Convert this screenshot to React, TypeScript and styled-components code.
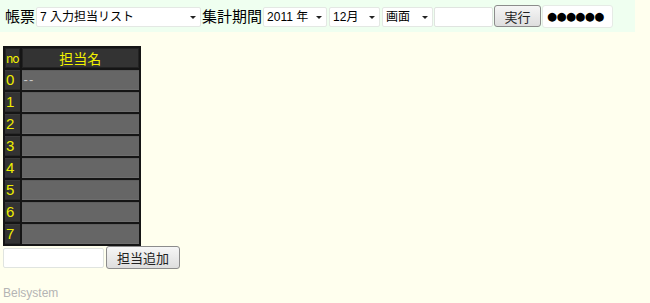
import React from "react";
import styled, { createGlobalStyle } from "styled-components";

const Global = createGlobalStyle`
  html, body { margin: 0; padding: 0; background: #ffffee; }
  body { font-family: "Liberation Sans", "Noto Sans CJK JP", sans-serif; color: #000; }
`;

const Page = styled.div`
  width: 650px;
  height: 303px;
  display: flex;
  flex-direction: column;
  background: #ffffee;
`;

const TopBar = styled.div`
  width: 635px;
  height: 32px;
  background: #effff0;
  display: flex;
  align-items: center;
  gap: 1px;
  padding: 0 0 0 5px;
  box-sizing: border-box;
`;

const Label = styled.span`
  font-size: 15px;
  line-height: 20px;
  font-family: "Noto Sans CJK JP", sans-serif;
  color: #000;
  white-space: nowrap;
  margin-top: -1px;
`;

const SelectWrap = styled.div<{ $w: number; $ml?: number }>`
  position: relative;
  width: ${(p) => p.$w}px;
  height: 20px;
  margin-top: 2px;
  margin-left: ${(p) => p.$ml ?? 0}px;
  &::after {
    content: "";
    position: absolute;
    right: 5px;
    top: 9px;
    border-left: 3px solid transparent;
    border-right: 3px solid transparent;
    border-top: 3px solid #222;
    pointer-events: none;
  }
`;

const Select = styled.select`
  appearance: none;
  -webkit-appearance: none;
  width: 100%;
  height: 100%;
  box-sizing: border-box;
  border: 1px solid #e4e8e4;
  border-radius: 2px;
  background: #fff;
  font-family: "Liberation Sans", "Noto Sans CJK JP", sans-serif;
  font-size: 12px;
  color: #000;
  padding: 0 14px 0 3px;
  outline: none;
`;

const TextInput = styled.input<{ $w: number; $mt?: number }>`
  width: ${(p) => p.$w}px;
  height: 20px;
  box-sizing: border-box;
  border: 1px solid #e0e4e0;
  border-radius: 2px;
  background: #fff;
  font-size: 12px;
  padding: 0 3px;
  margin-top: ${(p) => p.$mt ?? 2}px;
  outline: none;
`;

const Button = styled.button<{ $w: number; $h: number }>`
  width: ${(p) => p.$w}px;
  height: ${(p) => p.$h}px;
  box-sizing: border-box;
  border: 1px solid #8c8c8c;
  border-radius: 3px;
  background: linear-gradient(#f6f6f6, #dedede);
  font-family: "Noto Sans CJK JP", sans-serif;
  font-size: 13px;
  color: #222;
  padding: 0;
  line-height: 1;
`;

const Dots = styled.div`
  width: 71px;
  height: 23px;
  box-sizing: border-box;
  border: 1px solid #e6ebe6;
  border-radius: 3px;
  background: #fff;
  display: flex;
  align-items: center;
  padding-left: 4px;
  font-family: "DejaVu Sans", sans-serif;
  font-size: 11.5px;
  letter-spacing: -0.6px;
  color: #000;
`;

const Table = styled.table`
  margin: 14px 0 0 3px;
  border-collapse: separate;
  border-spacing: 2px;
  background: #151515;
  width: 138px;
`;

const HeadCell = styled.th<{ $small?: boolean }>`
  background: #333;
  color: #f2f200;
  font-weight: normal;
  font-family: "Noto Sans CJK JP", sans-serif;
  font-size: ${(p) => (p.$small ? 12 : 14)}px;
  height: 18px;
  padding: 0;
  line-height: 18px;
  border: 1px solid #222;
  letter-spacing: ${(p) => (p.$small ? "-1px" : "0")};
`;

const NoCell = styled.td`
  background: #333;
  color: #eeee00;
  font-size: 15px;
  width: 13px;
  height: 18px;
  padding: 0 0 0 1px;
  line-height: 18px;
  border-top: 1px solid #3c3c3c;
  border-bottom: 1px solid #2a2a2a;
`;

const NameCell = styled.td`
  background: #666;
  color: #c8c8c8;
  font-size: 13px;
  height: 18px;
  padding: 0 2px;
  line-height: 18px;
  letter-spacing: 1px;
  border-top: 1px solid #5e5e5e;
  border-bottom: 1px solid #6e6e6e;
`;

const AddRow = styled.div`
  display: flex;
  align-items: center;
  margin: 0 0 0 3px;
  gap: 2px;
`;

const Footer = styled.div`
  margin: 17px 0 0 3px;
  font-size: 12px;
  color: #b4b4b4;
  font-family: "Liberation Sans", sans-serif;
`;

const rows = ["--", "", "", "", "", "", "", ""];

export default function App() {
  return (
    <Page>
      <Global />
      <TopBar>
        <Label>帳票</Label>
        <SelectWrap $w={165}>
          <Select defaultValue="7">
            <option value="7">7 入力担当リスト</option>
          </Select>
        </SelectWrap>
        <Label>集計期間</Label>
        <SelectWrap $w={64}>
          <Select defaultValue="2011">
            <option value="2011">2011 年</option>
          </Select>
        </SelectWrap>
        <SelectWrap $w={51} $ml={1}>
          <Select defaultValue="12">
            <option value="12">12月</option>
          </Select>
        </SelectWrap>
        <SelectWrap $w={51} $ml={1}>
          <Select defaultValue="screen">
            <option value="screen">画面</option>
          </Select>
        </SelectWrap>
        <TextInput $w={59} />
        <Button $w={47} $h={22}>実行</Button>
        <Dots>●●●●●●</Dots>
      </TopBar>
      <Table>
        <thead>
          <tr>
            <HeadCell $small>no</HeadCell>
            <HeadCell>担当名</HeadCell>
          </tr>
        </thead>
        <tbody>
          {rows.map((name, i) => (
            <tr key={i}>
              <NoCell>{i}</NoCell>
              <NameCell>{name}</NameCell>
            </tr>
          ))}
        </tbody>
      </Table>
      <AddRow>
        <TextInput $w={101} $mt={0} />
        <Button $w={74} $h={23}>担当追加</Button>
      </AddRow>
      <Footer>Belsystem</Footer>
    </Page>
  );
}
